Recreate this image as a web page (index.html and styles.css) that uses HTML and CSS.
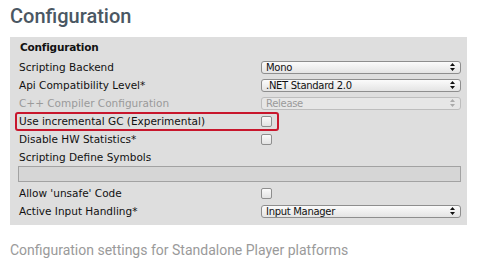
FILE: index.html
```html
<!DOCTYPE html>
<html lang="en">
<head>
    <meta charset="UTF-8">
    <title>Configuration</title>
    <link rel="stylesheet" href="styles.css">
</head>
<body>

<h1 class="page-title">Configuration</h1>

<!-- Player settings panel -->
<div class="panel">
    <div class="panel-header">Configuration</div>

    <div class="row">
        <span class="label">Scripting Backend</span>
        <div class="popup">
            <span>Mono</span>
            <svg class="arrows" width="5" height="8" viewBox="0 0 5 8"><path d="M2.5 0 L5 3 L0 3 Z M0 5 L5 5 L2.5 8 Z"/></svg>
        </div>
    </div>

    <div class="row">
        <span class="label">Api Compatibility Level*</span>
        <div class="popup">
            <span>.NET Standard 2.0</span>
            <svg class="arrows" width="5" height="8" viewBox="0 0 5 8"><path d="M2.5 0 L5 3 L0 3 Z M0 5 L5 5 L2.5 8 Z"/></svg>
        </div>
    </div>

    <div class="row disabled">
        <span class="label">C++ Compiler Configuration</span>
        <div class="popup">
            <span>Release</span>
            <svg class="arrows" width="5" height="8" viewBox="0 0 5 8"><path d="M2.5 0 L5 3 L0 3 Z M0 5 L5 5 L2.5 8 Z"/></svg>
        </div>
    </div>

    <div class="row highlight">
        <span class="label">Use incremental GC (Experimental)</span>
        <span class="checkbox"></span>
    </div>

    <div class="row">
        <span class="label">Disable HW Statistics*</span>
        <span class="checkbox"></span>
    </div>

    <div class="row">
        <span class="label">Scripting Define Symbols</span>
    </div>
    <div class="text-field"></div>

    <div class="row">
        <span class="label">Allow 'unsafe' Code</span>
        <span class="checkbox"></span>
    </div>

    <div class="row">
        <span class="label">Active Input Handling*</span>
        <div class="popup">
            <span>Input Manager</span>
            <svg class="arrows" width="5" height="8" viewBox="0 0 5 8"><path d="M2.5 0 L5 3 L0 3 Z M0 5 L5 5 L2.5 8 Z"/></svg>
        </div>
    </div>
</div>

<p class="caption">Configuration settings for Standalone Player platforms</p>

</body>
</html>
```

FILE: styles.css
```css
body {
    margin: 0;
    padding: 0 10px;
    background-color: #fff;
    font-family: Roboto, "Liberation Sans", sans-serif;
}
.page-title {
    margin: 0 0 7px 0;
    padding-top: 2px;
    font-size: 20px;
    line-height: 28px;
    font-weight: 500;
    color: #4a5763;
}
/* Panel estilo inspector */
.panel {
    width: 457px;
    box-sizing: border-box;
    padding: 1px 6px 5px 9px;
    background-color: #dedede;
    font-family: "DejaVu Sans", sans-serif;
    font-size: 10.5px;
    color: #111;
}
.panel-header {
    height: 18px;
    line-height: 18px;
    font-weight: bold;
    letter-spacing: -0.2px;
    margin-bottom: 2px;
    padding-left: 1px;
}
.row {
    position: relative;
    display: grid;
    grid-template-columns: 242px 200px;
    align-items: center;
    height: 18px;
}
.label {
    white-space: nowrap;
}
.disabled {
    color: #9a9a9a;
}
.popup {
    display: flex;
    align-items: center;
    justify-content: space-between;
    height: 13px;
    box-sizing: border-box;
    padding: 0 5px 0 4px;
    border: 1px solid #8e8e8e;
    border-radius: 3px;
    background: linear-gradient(#fbfbfb, #e4e4e4);
    font-size: 10px;
    letter-spacing: -0.3px;
    color: #111;
}
.disabled .popup {
    border-color: #bdbdbd;
    color: #9a9a9a;
    background: #e6e6e6;
}
.arrows {
    fill: #111;
}
.disabled .arrows {
    fill: #aaa;
}
.checkbox {
    width: 11px;
    height: 11px;
    box-sizing: border-box;
    border: 1px solid #8e8e8e;
    border-radius: 2px;
    background: linear-gradient(#fafafa, #e2e2e2);
}
/* Marco rojo de resaltado */
.highlight::after {
    content: "";
    position: absolute;
    left: -4px;
    top: 0;
    width: 264px;
    height: 19px;
    box-sizing: border-box;
    border: 2px solid #c8162c;
    border-radius: 3px;
}
.text-field {
    height: 16px;
    width: 443px;
    box-sizing: border-box;
    margin: 0 0 2px -1px;
    border: 1px solid #a2a2a2;
    background-color: #d6d6d6;
}
.caption {
    margin: 15px 0 0 0;
    font-size: 14px;
    line-height: 20px;
    color: #9a9a9a;
}
```
